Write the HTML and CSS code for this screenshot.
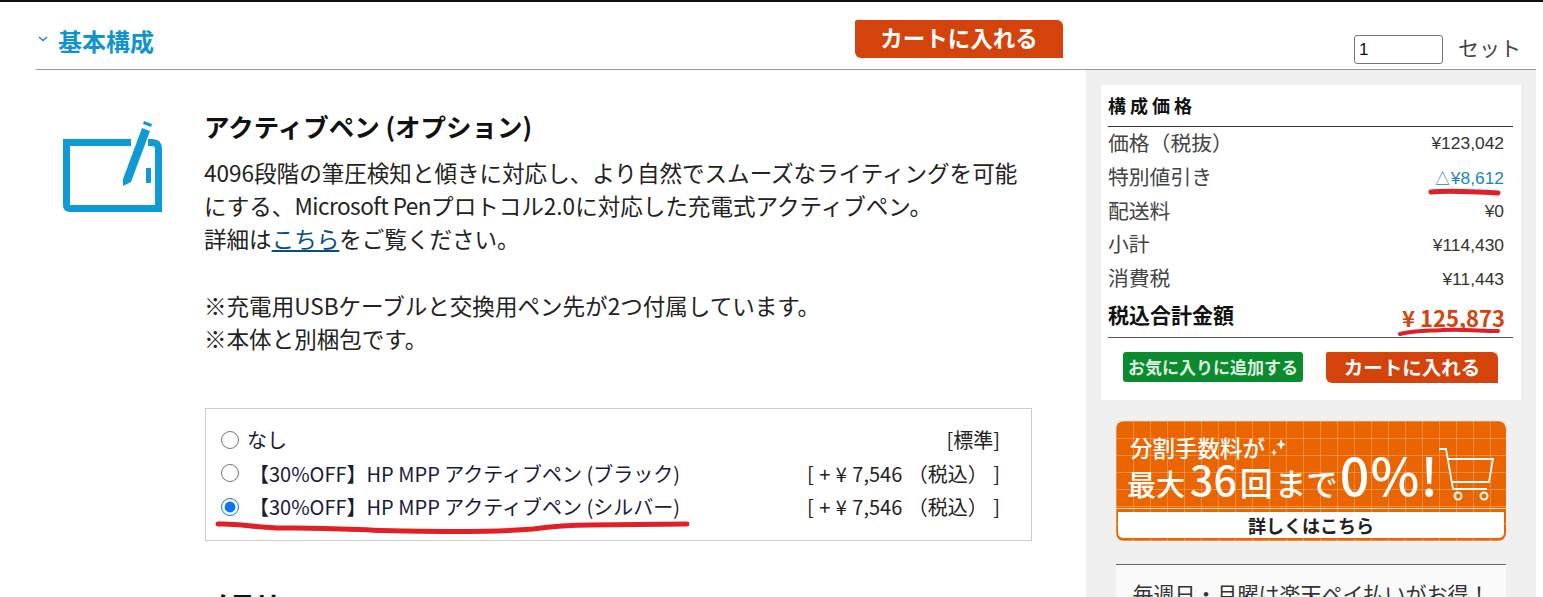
FILE: index.html
```html
<!DOCTYPE html>
<html lang="ja">
<head>
    <meta charset="UTF-8">
    <title>基本構成</title>
    <link rel="stylesheet" href="styles.css">
</head>
<body>

    <div class="page">
        <header class="head">
            <h2 class="head-title">
                <svg class="chevron" width="10" height="6" viewBox="0 0 10 6"><path d="M1 1l4 3.500L9 1" fill="none" stroke="#0f94cf" stroke-width="1.600"/></svg>
                基本構成
            </h2>
            <a class="cart-top">カートに入れる</a>
            <div class="qty">
                <input class="qty-input" type="text" value="1">
                <span class="qty-unit">セット</span>
            </div>
        </header>

        <div class="main">
            <section class="content">
                <div class="option">
                    <svg class="option-icon" width="100" height="95" viewBox="0 0 100 95">
                        <path d="M68 22.500H3.500V85q0 3.500 3.500 3.500H95.500V29q0-6.500-6.500-6.500H85" fill="none" stroke="#0f9ad6" stroke-width="7"/>
                        <path d="M60 66V59L79 8l8 3L68 62z" fill="#0f9ad6"/>
                        <path d="M81 1l8 3-1 3-8-3z" fill="#0f9ad6"/>
                        <path d="M83 48h5v15h-5z" fill="#0f9ad6"/>
                    </svg>
                    <div class="option-body">
                        <h3 class="option-title">アクティブペン (オプション)</h3>
                        <p class="option-text">4096段階の筆圧検知と傾きに対応し、より自然でスムーズなライティングを可能<br>にする、<span class="latin">Microsoft Pen</span>プロトコル2.0に対応した充電式アクティブペン。<br>詳細は<a class="link">こちら</a>をご覧ください。<br><br>※充電用USBケーブルと交換用ペン先が2つ付属しています。<br>※本体と別梱包です。</p>

                        <div class="choices">
                            <label class="choice">
                                <input class="radio-none" type="radio" name="pen">
                                <span>なし</span>
                                <span class="choice-price">[標準]</span>
                            </label>
                            <label class="choice">
                                <input type="radio" name="pen">
                                <span>【30%OFF】HP MPP アクティブペン (ブラック)</span>
                                <span class="choice-price">[ + ¥ 7,546 （税込） ]</span>
                            </label>
                            <label class="choice">
                                <input type="radio" name="pen" checked>
                                <span>【30%OFF】HP MPP アクティブペン (シルバー)</span>
                                <span class="choice-price">[ + ¥ 7,546 （税込） ]</span>
                            </label>
                        </div>

                        <h3 class="option-title next-title">メモリ</h3>
                    </div>
                </div>
            </section>

            <aside class="side">
                <div class="price-box">
                    <h4 class="price-title">構成価格</h4>
                    <div class="price-row"><span>価格（税抜）</span><span class="val">¥123,042</span></div>
                    <div class="price-row"><span>特別値引き</span><span class="val discount">△¥8,612</span></div>
                    <div class="price-row"><span>配送料</span><span class="val">¥0</span></div>
                    <div class="price-row"><span>小計</span><span class="val">¥114,430</span></div>
                    <div class="price-row"><span>消費税</span><span class="val">¥11,443</span></div>
                    <div class="price-total"><span>税込合計金額</span><span class="total-val">¥ 125,873</span></div>
                    <div class="price-btns">
                        <a class="btn-fav">お気に入りに追加する</a>
                        <a class="btn-cart">カートに入れる</a>
                    </div>
                </div>

                <div class="banner">
                    <div class="banner-main">
                        <div class="banner-copy">
                            <div class="banner-small">分割手数料が
                                <svg width="20" height="20" viewBox="0 0 20 20"><path d="M12 2l1.500 4L17 7.500 13.500 9 12 13l-1.500-4L7 7.500 10.500 6zM5 12l1 2.500L8 15.500 6 16.500 5 19l-1-2.500-2-1 2-1z" fill="#fff"/></svg>
                            </div>
                            <div class="banner-big">最大<span class="num">36</span><span class="kaisu">回</span><span class="made">まで</span><span class="zero">0%!</span></div>
                        </div>
                        <svg class="banner-cart" width="56" height="54" viewBox="0 0 56 54">
                            <path d="M0 1H7L14 41H48M8 11H54L50 34H13" fill="none" stroke="#fff" stroke-width="1.800"/>
                            <circle cx="19" cy="48" r="3.500" fill="none" stroke="#fff" stroke-width="2"/>
                            <circle cx="45" cy="48" r="3.500" fill="none" stroke="#fff" stroke-width="2"/>
                        </svg>
                    </div>
                    <div class="banner-link">詳しくはこちら</div>
                </div>

                <div class="notice">毎週日・月曜は楽天ペイ払いがお得！</div>
            </aside>
        </div>

        <!-- red marker lines drawn over the screenshot -->
        <svg class="marks" width="1543" height="597" viewBox="0 0 1543 597">
            <path d="M218 524C240 523 255 528 283 528C330 527 370 531 407 531C460 532 510 531 533 529C555 526 575 525 590 525L687 524" />
            <path d="M1431 192C1450 190 1470 192 1498 193" />
            <path class="thin" d="M1400 334C1415 330 1430 331 1443 330C1465 329 1480 331 1498 331" />
        </svg>
    </div>

</body>
</html>
```

FILE: styles.css
```css
/* Reset some default styles */
* {
    margin: 0;
    padding: 0;
    box-sizing: border-box;
}

html, body {
    height: 597px;
    overflow: hidden;
}

body {
    font-family: 'Noto Sans CJK JP', 'Noto Sans', sans-serif;
    background-color: #fff;
    color: #222;
}

.page {
    position: relative;
    height: 597px;
    overflow: hidden;
    border-top: 2px solid #111;
}

/* Header row */
.head {
    display: flex;
    align-items: flex-start;
    height: 68px;
    margin: 0 7px 0 36px;
    border-bottom: 1px solid #999;
}

.head-title {
    display: flex;
    align-items: center;
    width: 819px;
    height: 40px;
    margin-top: 19px;
    padding-left: 2px;
    gap: 10px;
    font-size: 24px;
    line-height: 40px;
    font-weight: 700;
    color: #0f94cf;
}

.chevron {
    margin-top: -4px;
}

.cart-top {
    width: 208px;
    height: 38px;
    margin-top: 18px;
    background-color: #d5430c;
    border-radius: 2px 6px 0 6px;
    color: #fff;
    font-size: 22.500px;
    font-weight: 700;
    line-height: 34px;
    text-align: center;
}

.qty {
    display: flex;
    align-items: flex-start;
    margin: 33px 0 0 auto;
    padding-right: 15px;
    gap: 15px;
}

.qty-input {
    width: 89px;
    height: 29px;
    padding-left: 4px;
    border: 1px solid #767676;
    border-radius: 3px;
    font-family: 'Liberation Sans', sans-serif;
    font-size: 17px;
    color: #111;
}

.qty-unit {
    font-size: 21px;
    line-height: 24px;
    color: #444;
}

/* Main columns */
.main {
    display: flex;
    height: 527px;
    margin-right: 7px;
}

.content {
    width: 1086px;
    padding: 38px 0 0 63px;
}

.option {
    display: flex;
    gap: 42px;
}

.option-icon {
    flex: none;
    margin-top: 12px;
}

.option-body {
    width: 827px;
}

.option-title {
    margin-left: -1px;
    font-size: 25.500px;
    line-height: 36px;
    font-weight: 700;
    color: #111;
}

.option-text {
    margin: 12px 0 0 -1px;
    font-size: 22.550px;
    line-height: 33.200px;
    color: #222;
}

.latin {
    letter-spacing: -0.5px;
}

.link {
    color: #0a4d80;
    text-decoration: underline;
}

.choices {
    margin-top: 53px;
    padding: 14px 31px 16px 14px;
    border: 1px solid #ccc;
}

.choice {
    display: flex;
    align-items: center;
    height: 33.500px;
    font-size: 20px;
    color: #1a1a3a;
}

.choice input {
    flex: none;
    width: 18px;
    height: 18px;
    margin: 0 10px 0 1px;
    accent-color: #0b76ef;
}

.choice .radio-none {
    margin-right: 8px;
}

.choice-price {
    margin-left: auto;
    font-size: 20px;
    word-spacing: 1px;
    color: #222;
}

.next-title {
    margin-top: 44px;
}

/* Price sidebar */
.side {
    width: 450px;
    padding-top: 15px;
    background-color: #f0f0f0;
}

.price-box {
    width: 420px;
    height: 315px;
    margin-left: 15px;
    padding: 0 8px 0 7px;
    background-color: #fff;
}

.price-title {
    height: 42px;
    border-bottom: 1px solid #333;
    font-size: 18px;
    line-height: 40px;
    font-weight: 700;
    letter-spacing: 4px;
    color: #111;
}

.price-row {
    display: flex;
    justify-content: space-between;
    align-items: center;
    height: 33.800px;
    padding: 0 9px 4px 0;
    font-size: 20.800px;
    color: #444;
}

.val {
    margin-top: 4px;
    font-family: 'Liberation Sans', sans-serif;
    font-size: 17.400px;
    color: #333;
}

.discount {
    color: #1a86b8;
}

.price-total {
    display: flex;
    justify-content: space-between;
    align-items: center;
    height: 42px;
    padding: 0 8px 4px 0;
    border-bottom: 1px solid #555;
    font-size: 21px;
    font-weight: 700;
    color: #111;
}

.total-val {
    margin-top: 6px;
    font-size: 22px;
    color: #d5430c;
}

.price-btns {
    display: flex;
    margin-top: 14px;
    padding-left: 15px;
    gap: 23px;
}

.btn-fav {
    width: 180px;
    height: 30px;
    background-color: #0b8a2e;
    border-radius: 3px;
    color: #dcefe0;
    font-size: 17px;
    line-height: 29px;
    font-weight: 700;
    text-align: center;
}

.btn-cart {
    width: 172px;
    height: 31px;
    background-color: #d5430c;
    border-radius: 2px 6px 0 6px;
    color: #fff;
    font-size: 19.500px;
    line-height: 30px;
    font-weight: 700;
    text-align: center;
}

/* Installment banner */
.banner {
    display: flex;
    flex-direction: column;
    width: 390px;
    height: 120px;
    margin: 21px 0 0 30px;
    border-radius: 8px;
    overflow: hidden;
    background-color: #ea6500;
    background-image:
        repeating-linear-gradient(90deg, rgba(255, 255, 255, 0.25) 0 1px, transparent 1px 17px),
        repeating-linear-gradient(0deg, rgba(255, 255, 255, 0.25) 0 1px, transparent 1px 17px);
    color: #fff;
}

.banner-main {
    display: flex;
    justify-content: space-between;
    flex: none;
    height: 88px;
    padding: 11px 11px 0 11px;
    border-bottom: 1px solid #fbd9bd;
}

.banner-copy {
    flex: none;
    white-space: nowrap;
}

.banner-small {
    display: flex;
    align-items: center;
    height: 30px;
    padding-left: 3px;
    gap: 4px;
    font-size: 22.500px;
    font-weight: 500;
    line-height: 30px;
}

.banner-big {
    display: flex;
    align-items: baseline;
    height: 44px;
    margin-top: -10px;
    font-size: 29px;
    line-height: 44px;
    font-weight: 500;
}

.num {
    margin-left: 5px;
    font-size: 41px;
}

.kaisu {
    margin: 0 2px 0 3px;
    font-size: 33px;
}

.made {
    font-size: 31.500px;
}

.zero {
    margin-left: 2px;
    font-size: 52px;
    font-weight: 500;
    letter-spacing: 1px;
}

.banner-cart {
    flex: none;
    margin-top: 16px;
}

.banner-link {
    flex: none;
    height: 26px;
    margin: 3px 2px 3px;
    background-color: #fff;
    border-radius: 0 0 5px 5px;
    color: #222;
    font-size: 18px;
    font-weight: 700;
    line-height: 26px;
    text-align: center;
}

.notice {
    width: 390px;
    height: 80px;
    margin: 23px 0 0 30px;
    padding-top: 13px;
    background-color: #fafafa;
    border-top: 1px solid #666;
    font-size: 21px;
    line-height: 30px;
    color: #333;
    text-align: center;
    white-space: nowrap;
}

/* Red marker lines */
.marks {
    position: absolute;
    top: -2px;
    left: 0;
    pointer-events: none;
}

.marks path {
    fill: none;
    stroke: #e01f26;
    stroke-width: 5;
    stroke-linecap: round;
}

.marks .thin {
    stroke-width: 4;
}
```
